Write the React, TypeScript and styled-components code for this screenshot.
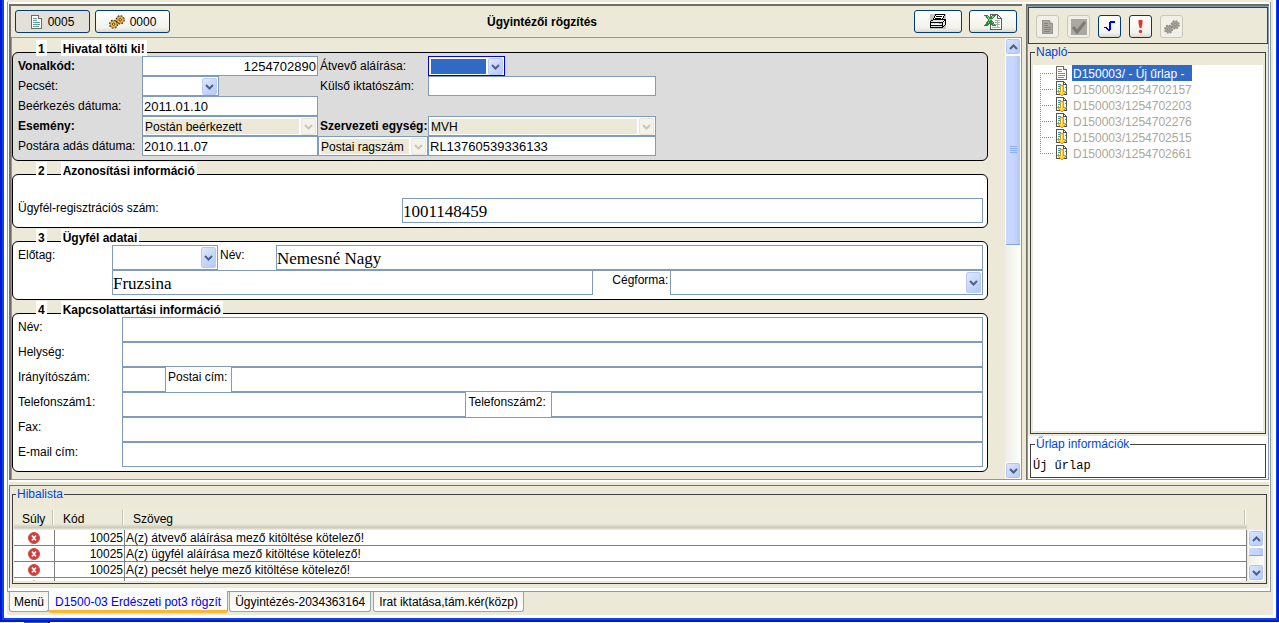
import React, { useId } from "react";
import styled, { createGlobalStyle, css } from "styled-components";

const color = {
  face: "#ece9d8",
  fieldLine: "#7f9db9",
  frame: "#716f64",
  group: "#404040",
  legend: "#0046d5",
  selection: "#316ac5",
};

const GlobalStyle = createGlobalStyle`
  *, *::before, *::after { box-sizing: border-box; }
  body {
    margin: 0;
    background: #ffffff;
    color: #000000;
    font: 12px/14px "Liberation Sans", Arial, sans-serif;
  }
  button, input, select { font: inherit; color: inherit; margin: 0; }
  svg { display: block; flex: none; }
`;

/* ---------- window chrome ---------- */

const Page = styled.div`
  display: flex;
  flex-direction: column;
  min-height: 100vh;
`;

const Desktop = styled.div`
  height: 1px;
  background: linear-gradient(90deg, #e8eefa 16px, #ffffff 16px 24px, #2b5f97 24px 48px, #000000 48px 50px, #ffffff 50px);
`;

const WindowEdge = styled.div`
  flex: 1;
  display: flex;
  border: solid #0019cf;
  border-width: 0 2px 2px 2px;
`;

const WindowBody = styled.div`
  flex: 1;
  min-width: 0;
  display: flex;
  flex-direction: column;
  border: solid #0845f0;
  border-width: 0 1px 2px 2px;
  padding: 0 3px 3px 3px;
  background: #ffffff;
`;

const Client = styled.div`
  flex: 1;
  display: flex;
  flex-direction: column;
  background: ${color.face};
  padding-right: 2px;
`;

const TabPanel = styled.main`
  flex: 1;
  display: flex;
  flex-direction: column;
  margin-top: 2px;
  border: solid #919b9c;
  border-width: 0 1px 1px 1px;
  padding: 2px 1px 3px 1px;
  background: #ffffff;
`;

const Split = styled.div`
  flex: 1;
  display: flex;
  gap: 4px;
  padding-bottom: 5px;
  background: linear-gradient(#ffffff, #ffffff) left bottom 3px / 100% 2px no-repeat ${color.face};
`;

const FormFrame = styled.section`
  flex: 1;
  min-width: 0;
  display: flex;
  flex-direction: column;
  border: solid ${color.frame};
  border-width: 2px 0 0 2px;
`;

const SideFrame = styled.aside`
  width: 243px;
  display: flex;
  flex-direction: column;
  border: solid ${color.frame};
  border-width: 2px 0 0 1px;
`;

const SidePane = styled.div`
  flex: 1;
  display: flex;
  flex-direction: column;
  border: 1px solid ${color.fieldLine};
`;

/* ---------- buttons ---------- */

const PushButton = styled.button<{ $size: "wide" | "medium" | "square"; $pressed?: boolean }>`
  display: flex;
  align-items: center;
  justify-content: center;
  gap: 5px;
  width: ${(p) => ({ wide: 75, medium: 48, square: 23 })[p.$size]}px;
  height: 23px;
  padding: 0;
  border: 1px solid #003c74;
  border-radius: 3px;
  background: ${(p) => (p.$pressed ? "#e2e0d8" : "linear-gradient(#ffffff, #f3f2ec 80%, #dcd8ca)")};
  &:disabled {
    border-color: #c9c7ba;
    background: #f2f0e6;
  }
`;

const FormToolbar = styled.header`
  display: flex;
  align-items: center;
  padding: 4px 5px 4px 4px;
`;

const ToolbarGroup = styled.div<{ $gap: number }>`
  display: flex;
  gap: ${(p) => p.$gap}px;
`;

const FormTitle = styled.h1`
  flex: 1;
  margin: 0;
  text-align: center;
  font-size: 12px;
  line-height: 14px;
`;

const SideToolbar = styled.div`
  display: flex;
  gap: 8px;
  padding: 7px 7px 5px;
  border: 1px solid ${color.group};
`;

/* ---------- form ---------- */

const ScrollPane = styled.div`
  flex: 1;
  display: flex;
  border: 1px solid ${color.fieldLine};
`;

const FormArea = styled.form`
  flex: 1;
  min-width: 0;
  display: flex;
  flex-direction: column;
  gap: 13px;
  padding: 14px 17px 7px 0;
`;

const Section = styled.section<{ $shaded?: boolean }>`
  border: 1px solid #000000;
  border-radius: 6px;
  padding: 0 4px 4px 0;
  background: ${(p) => (p.$shaded ? "#dcdcdc" : "#ffffff")};
`;

const SectionHeading = styled.h2`
  display: flex;
  gap: 14px;
  margin: -13px 0 0 23px;
  font-size: 12px;
  line-height: 14px;
`;

const HeadingPart = styled.span`
  padding: 2px 2px 0;
  background: #ffffff;
`;

const OfficeGrid = styled.div`
  display: grid;
  grid-template-columns: 129px 176px 110px 228px;
  grid-auto-rows: 20px;
`;

const Row = styled.div<{ $spaced?: boolean }>`
  display: flex;
  height: 25px;
  ${(p) => p.$spaced && "margin-top: 20px;"}
`;

const Label = styled.label<{ $width?: number; $bold?: boolean; $near?: boolean; $ruled?: boolean }>`
  flex: none;
  ${(p) => p.$width && `width: ${p.$width}px;`}
  padding-left: ${(p) => (p.$near ? 2 : 5)}px;
  line-height: 20px;
  white-space: nowrap;
  ${(p) => p.$bold && "font-weight: bold;"}
  ${(p) =>
    p.$ruled &&
    css`
      border-top: 1px solid ${color.fieldLine};
      padding-right: 2px;
      line-height: 18px;
      text-align: right;
    `}
`;

const RowIndent = styled.span`
  flex: none;
  width: 99px;
`;

const TextField = styled.input<{ $width?: number; $grow?: number; $large?: boolean; $right?: boolean }>`
  min-width: 0;
  ${(p) => (p.$width ? `width: ${p.$width}px;` : `flex: ${p.$grow ?? 1} 1 0;`)}
  height: 100%;
  padding: 1px 1px 0;
  border: 1px solid ${color.fieldLine};
  border-radius: 0;
  outline: 0;
  background: #ffffff;
  font-size: 13px;
  ${(p) => p.$right && "text-align: right;"}
  ${(p) =>
    p.$large &&
    css`
      padding: 3px 0 0;
      font-family: "Liberation Serif", "Times New Roman", serif;
      font-size: 17px;
    `}
`;

const ComboBox = styled.div<{ $width?: number; $grow?: number; $active?: boolean }>`
  display: grid;
  grid-template-columns: 1fr 15px;
  ${(p) => (p.$width ? `width: ${p.$width}px;` : "")}
  ${(p) => (p.$grow ? `flex: ${p.$grow} 1 0;` : "")}
  height: 100%;
  padding: 1px;
  border: 1px solid ${(p) => (p.$active ? "#0000d8" : color.fieldLine)};
  background: #ffffff;
  select {
    grid-area: 1 / 1 / 2 / 3;
    min-width: 0;
    margin: 1px 17px 1px 1px;
    padding: 1px 0 0;
    border: 0;
    outline: 0;
    appearance: none;
    background: ${(p) => (p.$active ? color.selection : "transparent")};
  }
  select:disabled {
    opacity: 1;
    color: #000000;
    background: ${color.face};
  }
`;

const ComboArrow = styled.span<{ $disabled?: boolean }>`
  grid-area: 1 / 2 / 2 / 3;
  display: flex;
  align-items: center;
  justify-content: center;
  border: 1px solid ${(p) => (p.$disabled ? "#e8e6dc" : "#b9cbf5")};
  border-radius: 2px;
  background: ${(p) => (p.$disabled ? "#f4f2e9" : "linear-gradient(135deg, #dfe8fe, #b2c8f8)")};
  color: ${(p) => (p.$disabled ? "#c9c7ba" : "#4d6185")};
  pointer-events: none;
`;

/* ---------- scroll bars ---------- */

const Track = styled.div`
  flex: none;
  width: 16px;
  display: flex;
  flex-direction: column;
  background: linear-gradient(90deg, #eeede5, #fefefb);
`;

const ScrollButton = styled.button`
  display: flex;
  align-items: center;
  justify-content: center;
  height: 17px;
  padding: 0;
  border: 1px solid #ffffff;
  border-radius: 3px;
  background: linear-gradient(135deg, #dfe8fe, #b2c8f8);
  box-shadow: inset 0 0 0 1px #b0c4f0;
  color: #4d6185;
`;

const Thumb = styled.div<{ $share: number }>`
  flex: ${(p) => p.$share} 1 0;
  display: flex;
  align-items: center;
  justify-content: center;
  border: 1px solid #ffffff;
  border-bottom-color: #86a4dc;
  border-radius: 2px;
  background: linear-gradient(90deg, #c9d8fc, #c6d5fd 60%, #b0c6f6);
`;

const TrackRest = styled.div<{ $share: number }>`
  flex: ${(p) => p.$share} 1 0;
`;

/* ---------- groups, tree, list ---------- */

const Group = styled.fieldset<{ $fill?: boolean; $tight?: boolean }>`
  ${(p) => p.$fill && "flex: 1;"}
  min-width: 0;
  margin: 0;
  padding: 6px 2px 2px ${(p) => (p.$tight ? 1 : 2)}px;
  border: 1px solid ${color.group};
  legend {
    margin-left: 2px;
    padding: 0 1px;
    line-height: 14px;
    color: ${color.legend};
  }
`;

const LogArea = styled.div`
  flex: 1;
  display: flex;
  flex-direction: column;
  padding: 1px 2px 2px;
`;

const InfoArea = styled.div`
  padding: 1px 2px;
  background: #ffffff;
`;

const InfoText = styled.p`
  margin: 0;
  font: 12px/18px "Liberation Mono", "Courier New", monospace;
`;

const Tree = styled.ul`
  height: 100%;
  margin: 0;
  padding: 0 0 0 7px;
  list-style: none;
  background: #ffffff;
`;

const TreeItem = styled.li`
  display: flex;
  align-items: center;
  gap: 2px;
  height: 16px;
`;

const TreeLabel = styled.span<{ $selected?: boolean }>`
  margin-left: 2px;
  padding: 2px 8px 0 1px;
  line-height: 14px;
  color: ${(p) => (p.$selected ? "#ffffff" : "#aca899")};
  ${(p) => p.$selected && `background: ${color.selection};`}
`;

const ErrorFrame = styled.section`
  padding: 1px 2px 4px;
  border: solid ${color.frame};
  border-width: 1px 0 0 1px;
  background: ${color.face};
`;

const ErrorBody = styled.div`
  display: flex;
  gap: 1px;
  height: 74px;
`;

const ErrorView = styled.div`
  flex: 1;
  overflow: hidden;
`;

const ErrorScroll = styled.div`
  display: flex;
  padding-top: 23px;
`;

const ErrorTable = styled.table`
  width: 100%;
  border-collapse: separate;
  border-spacing: 0;
  table-layout: fixed;
  th {
    height: 23px;
    padding: 0 0 0 8px;
    font-weight: normal;
    text-align: left;
    background:
      linear-gradient(#c5c2b3, #c5c2b3) right 2px top 3px / 1px 15px no-repeat,
      linear-gradient(#ffffff, #ffffff) right 1px top 3px / 1px 15px no-repeat,
      linear-gradient(#ebeadb 17px, #e2decd 18px, #cbc7b8 21px, #ece9d8 22px);
  }
  td {
    height: 16px;
    padding: 1px 1px 0;
    line-height: 14px;
    border: solid #808080;
    border-width: 0 1px 1px 0;
    background: #ffffff;
    white-space: nowrap;
  }
  td:nth-child(2) { text-align: right; }
  td svg { margin: 0 auto; }
`;

const TabBar = styled.nav`
  display: flex;
  align-items: flex-start;
  gap: 2px;
  height: 23px;
  padding-left: 2px;
`;

const Tab = styled.button<{ $active?: boolean; $compact?: boolean }>`
  height: 20px;
  padding: 0 ${(p) => (p.$compact ? 4 : 5)}px;
  border: solid #91a7b4;
  border-width: 0 1px 1px;
  border-radius: 0 0 3px 3px;
  background: linear-gradient(#f4f3ec, #ffffff);
  white-space: nowrap;
  ${(p) =>
    p.$active &&
    css`
      height: 22px;
      margin: -1px -1px 0 -3px;
      padding: 3px 6px 0;
      border-bottom: 3px solid #ffb732;
      background: #fcfcfe;
      color: #0000e0;
    `}
`;

/* ---------- icons ---------- */

const Chevron = ({ up }: { up?: boolean }) => (
  <svg width="9" height="6" viewBox="0 0 9 6" aria-hidden="true">
    <path d={up ? "M1 5 4.500 1.500 8 5" : "M1 1 4.500 4.500 8 1"} fill="none" stroke="currentColor" strokeWidth="2" />
  </svg>
);

const PageIcon = ({ muted }: { muted?: boolean }) => (
  <svg width="12" height="14" viewBox="0 0 12 14" shapeRendering="crispEdges" aria-hidden="true">
    <path d="M.5.5h7l3 3v10H.5z" fill={muted ? "#a9a89f" : "#fff"} stroke={muted ? "#96958d" : "#6e6c60"} />
    <path d="M7.500.5v3h3" fill={muted ? "#c4c3ba" : "#e4e2d8"} stroke={muted ? "#96958d" : "#6e6c60"} />
    <path d="M2 3.500h4M2 5.500h4M2 7.500h7M2 9.500h7M2 11.500h6" stroke={muted ? "#85847d" : "#5f9c98"} />
  </svg>
);

const DownloadPageIcon = () => (
  <svg width="12" height="16" viewBox="0 0 12 16" shapeRendering="crispEdges" aria-hidden="true">
    <path d="M.5.5h7l3 3v10H.5z" fill="#fff" stroke="#55544c" />
    <path d="M7.500.5v3h3" fill="none" stroke="#55544c" />
    <path d="M2 3.500h3M2 5.500h2M2 7.500h2M2 9.500h1M9 6.500h1" stroke="#3a9aa0" />
    <path d="M4 4h4v6h3v1h-1v1H9v1H8v1H7v1H5v-1H4v-1H3v-1H2v-1H1v-1h3z" fill="#e0991c" />
    <path d="M5 5h2v6h2v1H8v1H7v1H5v-1H4v-1H3v-1h2z" fill="#ffd23c" />
    <path d="M5 5h1v7H5z" fill="#fff0a4" />
  </svg>
);

const Gear = ({ x, y, muted }: { x: number; y: number; muted?: boolean }) => (
  <g transform={`translate(${x} ${y})`}>
    <circle r="4" fill="none" stroke={muted ? "#88877f" : "#2e2410"} strokeWidth="1.200" strokeDasharray="1.700 1.440" />
    <circle r="3.400" fill={muted ? "#a3a29a" : "#f8bf3e"} stroke={muted ? "#8f8e86" : "#8a6420"} strokeWidth=".7" />
    <circle r="1.200" fill={muted ? "#c0bfb6" : "#fff4d0"} stroke={muted ? "#88877f" : "#3c2a08"} strokeWidth=".9" />
  </g>
);

const GearsIcon = ({ muted }: { muted?: boolean }) => (
  <svg width="16" height="14" viewBox="0 0 16 14" aria-hidden="true">
    <Gear x={4.6} y={9.2} muted={muted} />
    <Gear x={11.2} y={4.8} muted={muted} />
  </svg>
);

const PrinterIcon = () => (
  <svg width="16" height="15" viewBox="0 0 16 15" shapeRendering="crispEdges" aria-hidden="true">
    <path d="M0 0h16v15H0z" fill="#c6c6c6" />
    <path d="M5.500.5h9l-2 5h-9z" fill="#fff" stroke="#000" />
    <path d="M6 2.500h6M5 4.500h6" stroke="#000" />
    <path d="M.5 7.500l3-2h10l2 0v5l-3 3H.5z" fill="#e4e4e4" stroke="#000" />
    <path d="M.5 8.500h12M12.500 8.500v5M12.500 8.500l3-3M.5 11.500h12" fill="none" stroke="#000" />
    <path d="M2 10h9v1H2z" fill="#fff" />
    <path d="M9 9.500h2" stroke="#b8b800" />
  </svg>
);

const SpreadsheetIcon = () => (
  <svg width="18" height="16" viewBox="0 0 18 16" shapeRendering="crispEdges" aria-hidden="true">
    <path d="M6.500.5h7l4 4v11h-11z" fill="#fff" stroke="#5c5c54" />
    <path d="M13.500.5v4h4" fill="none" stroke="#5c5c54" />
    <path d="M11 6.500h5M11 8.500h5M11 10.500h5M8 13.500h8M13.500 6v8" stroke="#a6b4a6" />
    <path d="M0 1h4l2 3 2-3h4L8 6l4 6H8L6 9l-2 3H0l4-6z" fill="#2a8a3a" />
    <path d="M1 2h2l7 9M8 2h2L2 11" fill="none" stroke="#8fd09a" strokeDasharray="1 1" />
  </svg>
);

const CheckIcon = () => (
  <svg width="16" height="16" viewBox="0 0 16 16" aria-hidden="true">
    <path d="M0 0h16v16H0z" fill="#aaa9a1" />
    <path d="M2 8l4 5 8-10" fill="none" stroke="#7c7b74" strokeWidth="3" />
  </svg>
);

const StepIcon = () => (
  <svg width="15" height="15" viewBox="0 0 15 15" shapeRendering="crispEdges" aria-hidden="true">
    <path d="M2 8h3v1h1v1h1V3h1V2h5v2H9v7H8v1H6v-1H5v-1H4V9H2z" fill="#0000f0" />
  </svg>
);

const AlertIcon = () => (
  <svg width="15" height="15" viewBox="0 0 15 15" aria-hidden="true">
    <path d="M5.500 1h4v3l-1 5h-2l-1-5z" fill="#e3342c" />
    <circle cx="7.500" cy="12.500" r="1.700" fill="#e3342c" />
  </svg>
);

const ErrorIcon = () => (
  <svg width="12" height="12" viewBox="0 0 12 12" role="img" aria-label="Hiba">
    <circle cx="6" cy="6" r="5.500" fill="#d63a34" stroke="#c4504a" />
    <path d="M4 3.500l4 5M8 3.500l-4 5" stroke="#fff" strokeWidth="1.600" />
  </svg>
);

const WarningIcon = () => (
  <svg width="12" height="12" viewBox="0 0 12 12" role="img" aria-label="Figyelmeztetés">
    <path d="M6 .5l5.500 11H.5z" fill="#f6c62c" stroke="#b88a14" />
  </svg>
);

const Branch = ({ first, last }: { first?: boolean; last?: boolean }) => (
  <svg width="14" height="16" viewBox="0 0 14 16" shapeRendering="crispEdges" aria-hidden="true">
    <path d={`M.5 ${first ? 8 : 0}V${last ? 8 : 16}M0 8.500h14`} stroke="#8c8c8c" strokeDasharray="1 1" />
  </svg>
);

/* ---------- composed parts ---------- */

type FieldProps = {
  label: string;
  value?: string;
  labelWidth?: number;
  width?: number;
  grow?: number;
  bold?: boolean;
  near?: boolean;
  ruled?: boolean;
  large?: boolean;
  right?: boolean;
};

function Field({ label, value = "", labelWidth, width, grow, bold, near, large, right }: FieldProps) {
  const id = useId();
  return (
    <>
      <Label htmlFor={id} $width={labelWidth} $bold={bold} $near={near}>
        {label}
      </Label>
      <TextField id={id} defaultValue={value} $width={width} $grow={grow} $large={large} $right={right} />
    </>
  );
}

type ComboProps = FieldProps & { disabled?: boolean; active?: boolean; hideLabel?: boolean };

function Combo({ label, value = "", labelWidth, width, grow, bold, near, ruled, disabled, active, hideLabel }: ComboProps) {
  const id = useId();
  return (
    <>
      {!hideLabel && (
        <Label htmlFor={id} $width={labelWidth} $bold={bold} $near={near} $ruled={ruled}>
          {label}
        </Label>
      )}
      <ComboBox $width={width} $grow={grow} $active={active}>
        <select id={id} disabled={disabled} aria-label={hideLabel ? label : undefined}>
          <option>{value}</option>
        </select>
        <ComboArrow $disabled={disabled}>
          <Chevron />
        </ComboArrow>
      </ComboBox>
    </>
  );
}

function FormSection({ number, title, shaded, children }: { number: number; title: string; shaded?: boolean; children: React.ReactNode }) {
  return (
    <Section $shaded={shaded}>
      <SectionHeading>
        <HeadingPart>{number}</HeadingPart>
        <HeadingPart>{title}</HeadingPart>
      </SectionHeading>
      {children}
    </Section>
  );
}

function ScrollBar({ thumb, rest, grip }: { thumb: number; rest: number; grip?: boolean }) {
  return (
    <Track>
      <ScrollButton type="button" aria-label="Fel">
        <Chevron up />
      </ScrollButton>
      <Thumb $share={thumb}>
        {grip && (
          <svg width="7" height="8" viewBox="0 0 7 8" shapeRendering="crispEdges" aria-hidden="true">
            <path d="M0 .5h7M0 2.500h7M0 4.500h7M0 6.500h7" stroke="#8cb0f8" />
          </svg>
        )}
      </Thumb>
      <TrackRest $share={rest} />
      <ScrollButton type="button" aria-label="Le">
        <Chevron />
      </ScrollButton>
    </Track>
  );
}

const forms = ["1254702157", "1254702203", "1254702276", "1254702515", "1254702661"];

const errors = [
  { code: "10025", text: "A(z) átvevő aláírása mező kitöltése kötelező!" },
  { code: "10025", text: "A(z) ügyfél aláírása mező kitöltése kötelező!" },
  { code: "10025", text: "A(z) pecsét helye mező kitöltése kötelező!" },
  { code: "", text: "A(z) aláírás helye mező kitöltése kötelező!", warning: true },
];

export default function App() {
  return (
    <Page>
      <GlobalStyle />
      <WindowEdge>
        <WindowBody>
          <Client>
            <TabPanel>
              <Split>
                <FormFrame>
                  <FormToolbar>
                    <ToolbarGroup $gap={5}>
                      <PushButton type="button" $size="wide" $pressed>
                        <PageIcon />
                        0005
                      </PushButton>
                      <PushButton type="button" $size="wide">
                        <GearsIcon />
                        0000
                      </PushButton>
                    </ToolbarGroup>
                    <FormTitle>Ügyintézői rögzítés</FormTitle>
                    <ToolbarGroup $gap={7}>
                      <PushButton type="button" $size="medium" aria-label="Nyomtatás">
                        <PrinterIcon />
                      </PushButton>
                      <PushButton type="button" $size="medium" aria-label="Excel">
                        <SpreadsheetIcon />
                      </PushButton>
                    </ToolbarGroup>
                  </FormToolbar>
                  <ScrollPane>
                    <FormArea>
                      <FormSection number={1} title="Hivatal tölti ki!" shaded>
                        <OfficeGrid>
                          <Field label="Vonalkód:" value="1254702890" bold right />
                          <Combo label="Átvevő aláírása:" width={77} near active />
                          <Combo label="Pecsét:" width={77} />
                          <Field label="Külső iktatószám:" near />
                          <Field label="Beérkezés dátuma:" value="2011.01.10" />
                          <span />
                          <span />
                          <Combo label="Esemény:" value="Postán beérkezett" bold disabled />
                          <Combo label="Szervezeti egység:" value="MVH" bold near disabled />
                          <Field label="Postára adás dátuma:" value="2010.11.07" />
                          <Combo label="Azonosító típusa" value="Postai ragszám" disabled hideLabel />
                          <TextField aria-label="Ragszám" defaultValue="RL13760539336133" />
                        </OfficeGrid>
                      </FormSection>

                      <FormSection number={2} title="Azonosítási információ">
                        <Row $spaced>
                          <Field label="Ügyfél-regisztrációs szám:" value="1001148459" labelWidth={389} large />
                        </Row>
                      </FormSection>

                      <FormSection number={3} title="Ügyfél adatai">
                        <Row>
                          <Combo label="Előtag:" labelWidth={99} width={106} />
                          <Field label="Név:" value="Nemesné Nagy" labelWidth={58} near large />
                        </Row>
                        <Row>
                          <RowIndent />
                          <TextField aria-label="Név (folytatás)" defaultValue="Fruzsina" $grow={483} $large />
                          <Combo label="Cégforma:" labelWidth={77} grow={311} ruled />
                        </Row>
                      </FormSection>

                      <FormSection number={4} title="Kapcsolattartási információ">
                        <Row>
                          <Field label="Név:" labelWidth={109} />
                        </Row>
                        <Row>
                          <Field label="Helység:" labelWidth={109} />
                        </Row>
                        <Row>
                          <Field label="Irányítószám:" labelWidth={109} width={44} />
                          <Field label="Postai cím:" labelWidth={65} near />
                        </Row>
                        <Row>
                          <Field label="Telefonszám1:" labelWidth={109} grow={344} />
                          <Field label="Telefonszám2:" labelWidth={85} grow={432} near />
                        </Row>
                        <Row>
                          <Field label="Fax:" labelWidth={109} />
                        </Row>
                        <Row>
                          <Field label="E-mail cím:" labelWidth={109} />
                        </Row>
                      </FormSection>
                    </FormArea>
                    <ScrollBar thumb={189} rest={219} grip />
                  </ScrollPane>
                </FormFrame>

                <SideFrame>
                  <SidePane>
                    <SideToolbar>
                      <PushButton type="button" $size="square" disabled aria-label="Új">
                        <PageIcon muted />
                      </PushButton>
                      <PushButton type="button" $size="square" disabled aria-label="Elfogad">
                        <CheckIcon />
                      </PushButton>
                      <PushButton type="button" $size="square" aria-label="Ellenőriz">
                        <StepIcon />
                      </PushButton>
                      <PushButton type="button" $size="square" aria-label="Hibák">
                        <AlertIcon />
                      </PushButton>
                      <PushButton type="button" $size="square" disabled aria-label="Feldolgoz">
                        <GearsIcon muted />
                      </PushButton>
                    </SideToolbar>
                    <LogArea>
                      <Group $fill>
                        <legend>Napló</legend>
                        <Tree>
                          <TreeItem>
                            <Branch first />
                            <PageIcon />
                            <TreeLabel $selected>D150003/ - Új űrlap -</TreeLabel>
                          </TreeItem>
                          {forms.map((code, i) => (
                            <TreeItem key={code}>
                              <Branch last={i === forms.length - 1} />
                              <DownloadPageIcon />
                              <TreeLabel>D150003/{code}</TreeLabel>
                            </TreeItem>
                          ))}
                        </Tree>
                      </Group>
                    </LogArea>
                    <InfoArea>
                      <Group>
                        <legend>Űrlap információk</legend>
                        <InfoText>Új űrlap</InfoText>
                      </Group>
                    </InfoArea>
                  </SidePane>
                </SideFrame>
              </Split>

              <ErrorFrame>
                <Group $tight>
                  <legend>Hibalista</legend>
                  <ErrorBody>
                    <ErrorView>
                      <ErrorTable>
                        <colgroup>
                          <col width="41" />
                          <col width="70" />
                          <col />
                        </colgroup>
                        <thead>
                          <tr>
                            <th>Súly</th>
                            <th>Kód</th>
                            <th>Szöveg</th>
                          </tr>
                        </thead>
                        <tbody>
                          {errors.map((e) => (
                            <tr key={e.text}>
                              <td>{e.warning ? <WarningIcon /> : <ErrorIcon />}</td>
                              <td>{e.code}</td>
                              <td>{e.text}</td>
                            </tr>
                          ))}
                        </tbody>
                      </ErrorTable>
                    </ErrorView>
                    <ErrorScroll>
                      <ScrollBar thumb={8} rest={9} />
                    </ErrorScroll>
                  </ErrorBody>
                </Group>
              </ErrorFrame>
            </TabPanel>
            <TabBar>
              <Tab type="button" $compact>
                Menü
              </Tab>
              <Tab type="button" $active>
                D1500-03 Erdészeti pot3 rögzít
              </Tab>
              <Tab type="button">Ügyintézés-2034363164</Tab>
              <Tab type="button">Irat iktatása,tám.kér(közp)</Tab>
            </TabBar>
          </Client>
        </WindowBody>
      </WindowEdge>
      <Desktop />
    </Page>
  );
}
